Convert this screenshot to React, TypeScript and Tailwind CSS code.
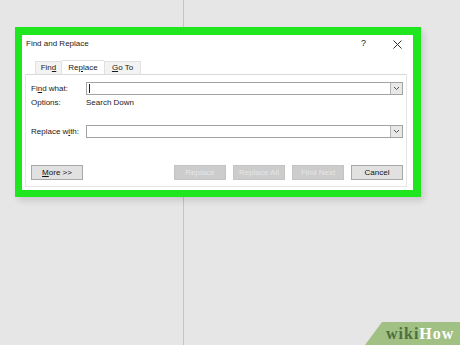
import React from "react";

const font = { fontFamily: '"Liberation Sans", Arial, sans-serif' };

const U = ({ children }: any) => <span className="underline underline-offset-1">{children}</span>;

const Combo = ({ cursor }: any) => (
  <div className="flex-1 h-[13px] flex border border-[#a3a3a3] bg-white">
    <div className="flex-1 flex items-center pl-[2px]">
      {cursor && <div className="w-px h-[9px] bg-[#222]" />}
    </div>
    <div className="w-[12px] h-full border-l border-[#b5b5b5] bg-[#e8e8e8] flex items-center justify-center">
      <svg width="7" height="5" viewBox="0 0 7 5">
        <path d="M1 1 L3.5 3.5 L6 1" fill="none" stroke="#555" strokeWidth="1" />
      </svg>
    </div>
  </div>
);

const Btn = ({ children, disabled }: any) => (
  <div
    className={
      "w-[52px] h-[15px] flex items-center justify-center text-[8px] border " +
      (disabled
        ? "bg-[#cccccc] border-[#c4c4c4] text-[#e6e6e6]"
        : "bg-[#e1e1e1] border-[#a8a8a8] text-[#111]")
    }
  >
    {children}
  </div>
);

export default function App() {
  return (
    <div className="relative w-[460px] h-[345px] overflow-hidden bg-[#e6e6e6] flex">
      <div className="ml-[183px] w-px h-full bg-[#c4c4c4]" />

      {/* dialog */}
      <div
        className="absolute left-[15px] top-[27px] border-l-[7px] border-r-[8px] border-t-[8px] border-b-[7px] border-[#1fe61f] shadow-[3px_4px_6px_rgba(0,0,0,0.12)]"
        style={font}
      >
        <div className="w-[391px] h-[155px] bg-white flex flex-col text-[#1a1a1a]">
          <div className="h-[18px] flex items-center pl-[4px]">
            <span className="text-[8px]">Find and Replace</span>
            <span className="ml-auto text-[9px] mr-[27px]">?</span>
            <svg width="9" height="9" viewBox="0 0 9 9" className="mr-[11px]">
              <path d="M0.5 0.5 L8.5 8.5 M8.5 0.5 L0.5 8.5" stroke="#333" strokeWidth="1" />
            </svg>
          </div>

          <div className="mt-[8px] ml-[3px] mr-[6px] flex flex-col">
            {/* tabs */}
            <div className="h-[13px] flex items-end pl-[10px] text-[8px]">
              <div className="w-[27px] h-[13px] flex items-center justify-center bg-[#f3f3f3] border border-b-0 border-[#e0e0e0]">
                Fin<U>d</U>
              </div>
              <div className="w-[42px] h-[14px] flex items-center justify-center bg-white border-t border-[#e0e0e0]">
                Re<U>p</U>lace
              </div>
              <div className="w-[37px] h-[13px] flex items-center justify-center bg-[#f3f3f3] border border-b-0 border-[#e0e0e0]">
                <U>G</U>o To
              </div>
            </div>

            {/* tab page */}
            <div className="h-[113px] border border-[#e6e6e6] border-t-[#dadada] flex flex-col pl-[5px] pr-[3px] pt-[7px] pb-[6px] text-[8px]">
              <div className="flex items-center">
                <span className="w-[55px]">Fi<U>n</U>d what:</span>
                <Combo cursor />
              </div>
              <div className="flex items-center mt-[2px]">
                <span className="w-[55px]">Options:</span>
                <span>Search Down</span>
              </div>
              <div className="flex items-center mt-[16px]">
                <span className="w-[55px]">Replace w<U>i</U>th:</span>
                <Combo />
              </div>
              <div className="mt-auto flex gap-[7px]">
                <Btn><U>M</U>ore &gt;&gt;</Btn>
                <div className="flex-1" />
                <Btn disabled>Replace</Btn>
                <Btn disabled>Replace All</Btn>
                <Btn disabled>Find Next</Btn>
                <Btn>Cancel</Btn>
              </div>
            </div>
          </div>
        </div>
      </div>

      {/* wikiHow badge */}
      <div className="absolute right-0 bottom-0 w-[95px] h-[23px] bg-[#a0c084] [clip-path:polygon(17px_0,100%_0,100%_100%,0_100%)] flex items-center pl-[21px]">
        <span
          className="text-[16px] font-bold tracking-[1px] leading-none"
          style={{ fontFamily: '"Liberation Serif", "DejaVu Serif", serif' }}
        >
          <span className="text-[#4f6e3c]">wiki</span>
          <span className="text-white">How</span>
        </span>
      </div>
    </div>
  );
}
